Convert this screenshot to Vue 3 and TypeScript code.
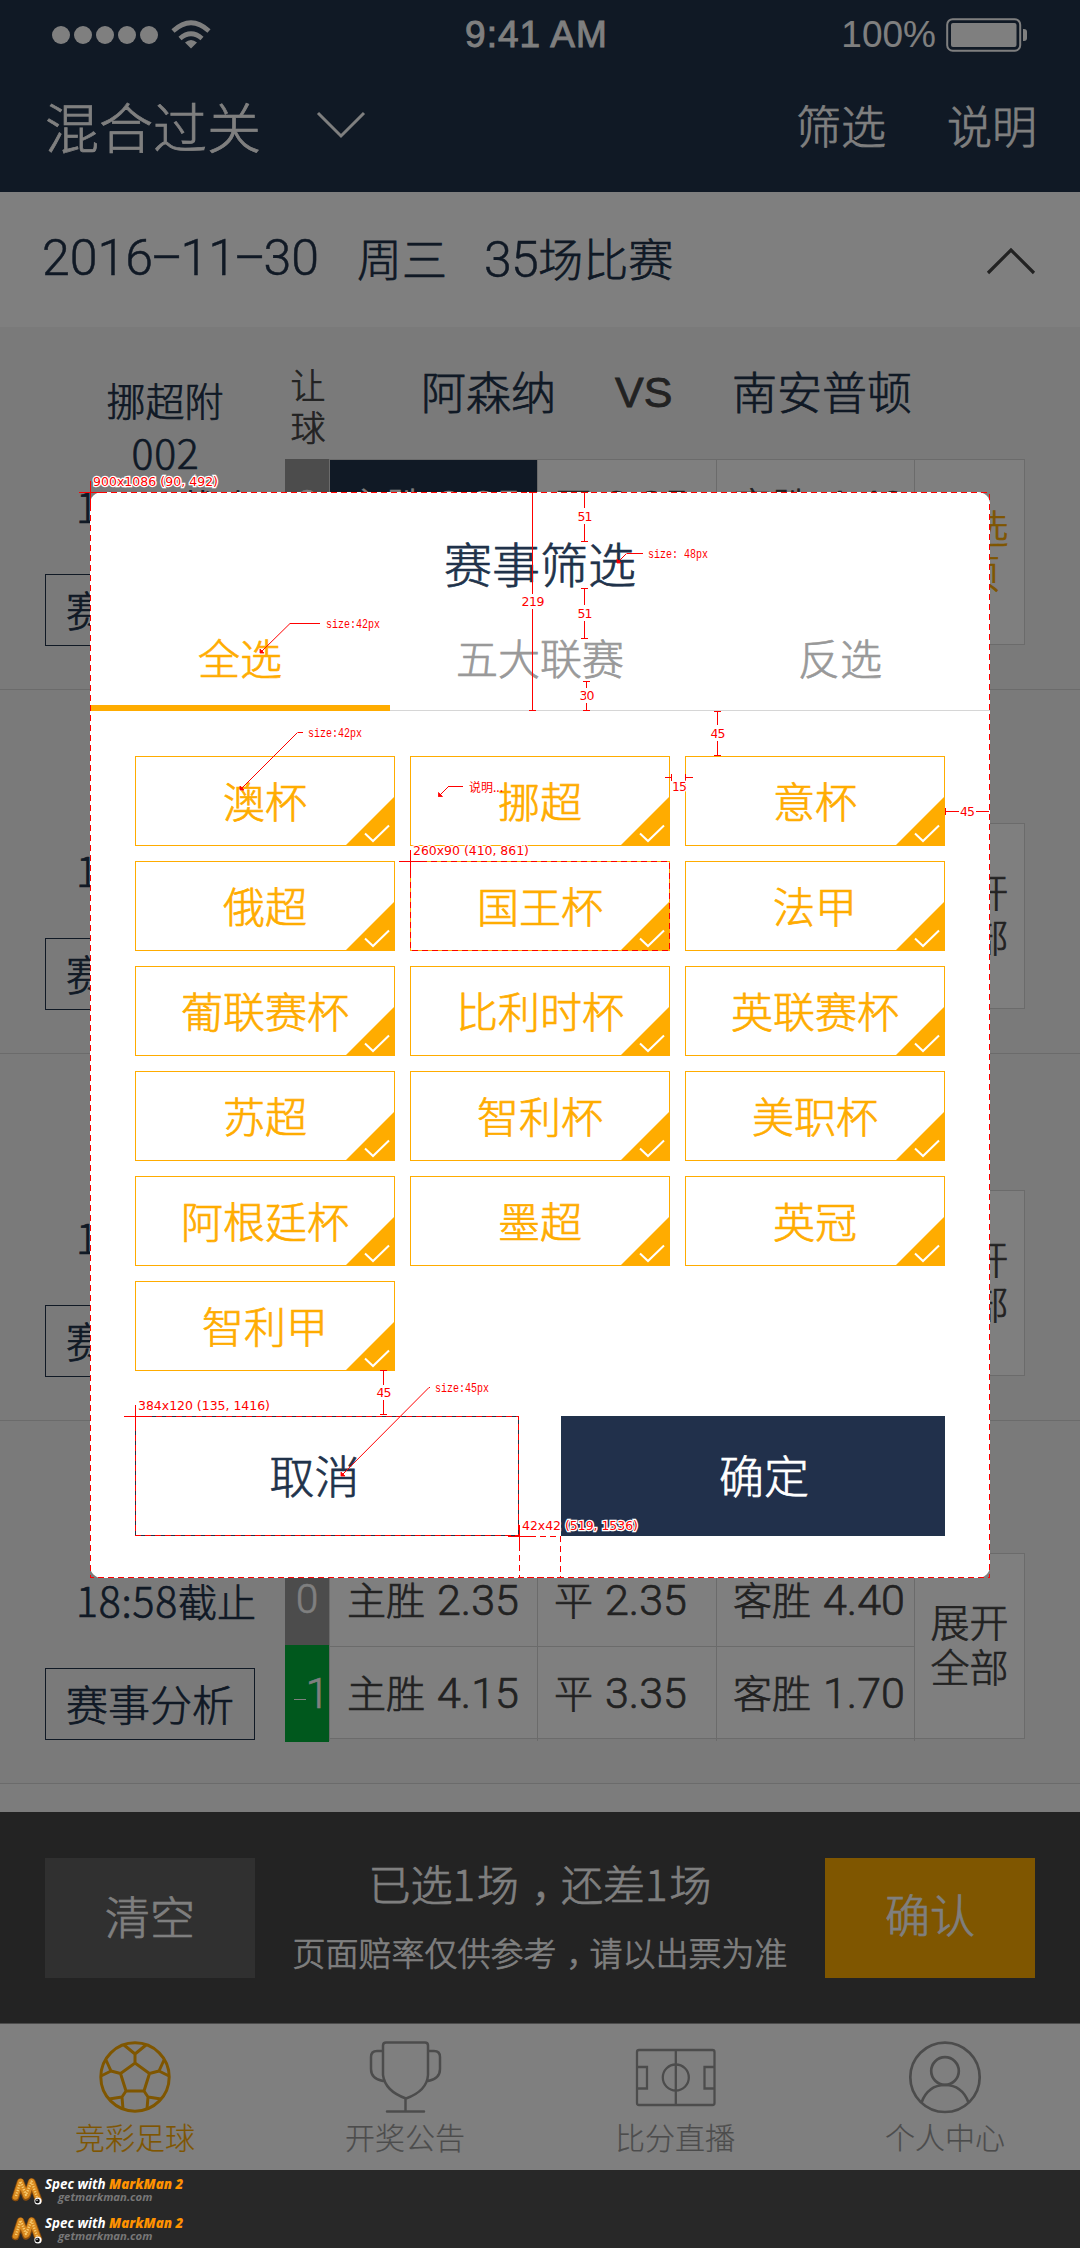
<script setup lang="ts">
interface Odds { name: string; value: string; picked?: boolean }
interface Match {
  league: string
  home: string
  away: string
  height: number
  offset: number
  rows: { handicap: string; green?: boolean; odds: Odds[] }[]
  more: [string, string]
  active?: boolean
}

const rows = (picked = false): Match['rows'] => [
  {
    handicap: '0',
    odds: [
      { name: '主胜', value: '2.35', picked },
      { name: '平', value: '2.35' },
      { name: '客胜', value: '4.40' },
    ],
  },
  {
    handicap: '-1',
    green: true,
    odds: [
      { name: '主胜', value: '4.15' },
      { name: '平', value: '3.35' },
      { name: '客胜', value: '1.70' },
    ],
  },
]

const base = { league: '挪超附', home: '阿森纳', away: '南安普顿' }
const matches: Match[] = [
  { ...base, height: 363, offset: 0, rows: rows(true), more: ['已选', '1项'], active: true },
  { ...base, height: 364, offset: 1, rows: rows(), more: ['展开', '全部'] },
  { ...base, height: 367, offset: 4, rows: rows(), more: ['展开', '全部'] },
  { ...base, height: 363, offset: 0, rows: rows(), more: ['展开', '全部'] },
]

const filterTabs = ['全选', '五大联赛', '反选']
const leagues = [
  '澳杯', '挪超', '意杯', '俄超', '国王杯', '法甲', '葡联赛杯', '比利时杯',
  '英联赛杯', '苏超', '智利杯', '美职杯', '阿根廷杯', '墨超', '英冠', '智利甲',
]

// Spec marks: vertical spans, pointer lines and framed areas
const spans = [
  { x: 532.5, y1: 492.5, y2: 710.5, g1: 594, g2: 609, text: '219', w: 23 },
  { x: 584.5, y1: 492.5, y2: 541.5, g1: 508, g2: 524, text: '51', w: 15 },
  { x: 584.5, y1: 588.5, y2: 638.5, g1: 605, g2: 621, text: '51', w: 15 },
  { x: 586.5, y1: 681.5, y2: 710.5, g1: 688, g2: 703, text: '30', w: 15 },
  { x: 717.5, y1: 711.5, y2: 755.5, g1: 725, g2: 741, text: '45', w: 15 },
  { x: 383.5, y1: 1370.5, y2: 1414.5, g1: 1385, g2: 1400, text: '45', w: 15 },
]
const frames = [
  { x: 90, y: 492, w: 900, h: 1086, text: '900x1086 (90, 492)', tw: 125 },
  { x: 410, y: 861, w: 260, h: 90, text: '260x90 (410, 861)', tw: 116 },
  { x: 135, y: 1416, w: 384, h: 120, text: '384x120 (135, 1416)', tw: 132 },
  { x: 519, y: 1536, w: 42, h: 42, text: '42x42 (519, 1536)', tw: 116 },
]
const pointers = [
  { tx: 260, ty: 653, ex: 290, ey: 623.5, hx: 320, lx: 326, text: 'size:42px', w: 54 },
  { tx: 617, ty: 563, ex: 626.5, ey: 553.5, hx: 643, lx: 648, text: 'size: 48px', w: 60 },
  { tx: 240, ty: 790, ex: 297.5, ey: 732.5, hx: 303, lx: 308, text: 'size:42px', w: 54 },
  { tx: 341, ty: 1476, ex: 429, ey: 1387.5, hx: 430, lx: 435, text: 'size:45px', w: 54 },
]
</script>

<template>
  <div class="page">
    <div class="app">
      <header class="top">
        <div class="status">
          <svg class="signal" width="176" height="34" viewBox="0 0 176 34">
            <g fill="#fff">
              <circle v-for="i in 5" :key="i" :cx="9 + (i - 1) * 22" cy="17" r="9" />
              <path d="M139 30.5l-6-6q6-5 12 0z" />
            </g>
            <g fill="none" stroke="#fff" stroke-width="4.6">
              <path d="M128 20.5q11-9.5 22 0" />
              <path d="M121 13q18-16.500 36 0" />
            </g>
          </svg>
          <div class="clock">9:41 AM</div>
          <div class="power">
            <span>100%</span>
            <svg width="82" height="36" viewBox="0 0 82 36">
              <rect x="1.200" y="2.200" width="73" height="31.500" rx="5.500" fill="none" stroke="#fff" stroke-width="2" />
              <rect x="5" y="6" width="65.500" height="24" rx="2" fill="#fff" />
              <path d="M77 12h1q3 0 3 3v6q0 3-3 3h-1z" fill="#fff" />
            </svg>
          </div>
        </div>
        <div class="nav">
          <span class="nav-title">混合过关</span>
          <svg width="50" height="28" viewBox="0 0 50 28"><path d="M2 2l23 23L48 2" fill="none" stroke="#fff" stroke-width="3" /></svg>
          <span class="nav-link first">筛选</span>
          <span class="nav-link">说明</span>
        </div>
      </header>

      <div class="day">
        <span class="num date">2016<i>–</i>11<i>–</i>30</span>
        <span class="week">周三</span>
        <span class="count"><span class="num">35</span>场比赛</span>
        <svg width="50" height="28" viewBox="0 0 50 28"><path d="M2 26L25 3l23 23" fill="none" stroke="#444" stroke-width="3.200" /></svg>
      </div>

      <div class="list">
        <section v-for="(m, i) in matches" :key="i" class="match" :style="{ height: m.height + 'px', paddingTop: m.offset + 'px' }">
          <div class="info">
            <div class="league">{{ m.league }}</div>
            <div class="code">002</div>
            <div class="time"><span>18:58</span>截止</div>
            <div class="analysis">赛事分析</div>
          </div>
          <div class="board">
            <div class="teams">
              <span class="rq">让<br />球</span>
              <span class="home">{{ m.home }}</span>
              <span class="vs">VS</span>
              <span class="away">{{ m.away }}</span>
            </div>
            <div class="odds">
              <div class="odds-rows">
                <div v-for="r in m.rows" :key="r.handicap" class="odds-row">
                  <div class="handicap" :class="{ green: r.green }">
                    <template v-if="r.green"><i class="minus"></i>1</template>
                    <template v-else>{{ r.handicap }}</template>
                  </div>
                  <div v-for="o in r.odds" :key="o.name" class="cell" :class="{ picked: o.picked }">
                    {{ o.name }}<span class="val">{{ o.value }}</span>
                  </div>
                </div>
              </div>
              <div class="more" :class="{ active: m.active }">{{ m.more[0] }}<br />{{ m.more[1] }}</div>
            </div>
          </div>
        </section>
      </div>

      <div class="betbar">
        <div class="btn clear">清空</div>
        <div class="summary">
          <div class="s1">已选<i>1</i>场<b>，</b>还差<i>1</i>场</div>
          <div class="s2">页面赔率仅供参考<b>，</b>请以出票为准</div>
        </div>
        <div class="btn ok">确认</div>
      </div>

      <nav class="tabs">
        <div class="tab on">
          <svg width="82" height="78" viewBox="-41 -39 82 78" fill="none" stroke="currentColor" stroke-width="3">
            <circle r="34.200" />
            <path d="M0-14L14.500-3.500 9 14H-9L-14.500-3.500zM0-14V-23M0-23L-11-32M0-23L11-32M14.500-3.500L24-6M24-6L29-17M24-6L34-1M-14.500-3.500L-24-6M-24-6L-29-17M-24-6L-34-1M9 14L13 20M13 20L12 32M13 20L26 22M-9 14L-13 20M-13 20L-12 32M-13 20L-26 22" />
          </svg>
          <span>竞彩足球</span>
        </div>
        <div class="tab">
          <svg width="82" height="78" viewBox="-41 -39 82 78" fill="none" stroke="currentColor" stroke-width="2.500" stroke-linecap="round">
            <path d="M-22-31.500q0-3 3-3H20q3 0 3 3V-2Q22 14 1 21.500Q-20 14-22-2zM-22-26h-6q-6 0-6 6V-8Q-34 2-22 4M23-26h6q6 0 6 6V-8Q35 2 23 4M.5 21.500V34.500M-18 34.500H19" />
          </svg>
          <span>开奖公告</span>
        </div>
        <div class="tab">
          <svg width="82" height="78" viewBox="-41 -39 82 78" fill="none" stroke="currentColor" stroke-width="2.300">
            <rect x="-38" y="-27" width="77.500" height="55" rx="2" />
            <path d="M.8-27V28M-38-10h10V11.500h-10M39.500-10h-10V11.500h10" />
            <circle cx=".8" cy=".5" r="13" />
          </svg>
          <span>比分直播</span>
        </div>
        <div class="tab">
          <svg width="82" height="78" viewBox="-41 -39 82 78" fill="none" stroke="currentColor" stroke-width="2.700">
            <circle cy=".3" r="34.700" />
            <circle cy="-6" r="13.800" />
            <path d="M-23.500 25.500Q-17 8 0 8T23.500 25.500" />
          </svg>
          <span>个人中心</span>
        </div>
      </nav>

      <div class="scrim"></div>

      <div class="dialog">
        <div class="d-title">赛事筛选</div>
        <div class="d-tabs">
          <div v-for="(t, i) in filterTabs" :key="t" class="d-tab" :class="{ on: i === 0 }">{{ t }}</div>
        </div>
        <div class="chips">
          <div v-for="l in leagues" :key="l" class="chip">
            {{ l }}
            <svg class="mark" width="50" height="50" viewBox="0 0 50 50">
              <path d="M0 50L50 0v50z" fill="#ffac00" />
              <path d="M20 37.500l8 7.500L44 29.500" fill="none" stroke="#fff" stroke-width="2" />
            </svg>
          </div>
        </div>
        <div class="actions">
          <div class="action">取消</div>
          <div class="action primary">确定</div>
        </div>
      </div>

      <svg class="spec" width="1080" height="2170" viewBox="0 0 1080 2170">
        <g fill="none" stroke="#f00" shape-rendering="crispEdges">
          <template v-for="f in frames" :key="f.text">
            <rect :x="f.x + 0.5" :y="f.y + 0.5" :width="f.w - 1" :height="f.h - 1" stroke-dasharray="6 4" />
            <path :d="`M${f.x - 11} ${f.y + 0.5}h26M${f.x + 0.5} ${f.y - 11}v26`" />
          </template>
          <path
            v-for="s in spans" :key="s.x + '-' + s.y1"
            :d="`M${s.x - 3.5} ${s.y1}h7M${s.x} ${s.y1}V${s.g1}M${s.x} ${s.g2}V${s.y2}M${s.x - 3.5} ${s.y2}h7`"
          />
          <path d="M665 777.500h6M671.500 774v7M685.500 774v7M686 777.500h7M945.500 808v7M946 811.500h13M976 811.500h13" />
        </g>
        <g fill="none" stroke="#f00">
          <g v-for="p in pointers" :key="p.ty">
            <path :d="`M${p.ex} ${p.ey}H${p.hx}`" shape-rendering="crispEdges" />
            <path :d="`M${p.tx} ${p.ty}L${p.ex} ${p.ey}`" />
            <path :d="`M${p.tx} ${p.ty}v-4l4 4z`" fill="#f00" stroke-width=".8" />
          </g>
          <path d="M448 786.500h15" shape-rendering="crispEdges" />
          <path d="M438.500 796.500l10-10" />
          <path d="M438.500 796.500v-4l4 4z" fill="#f00" stroke-width=".8" />
        </g>
        <g class="dim">
          <text v-for="f in frames" :key="f.text" :x="f.x + 3" :y="f.y - 6" :textLength="f.tw">{{ f.text }}</text>
          <text v-for="s in spans" :key="s.x + '-' + s.y1" :x="s.x + 0.5 - s.w / 2" :y="(s.g1 + s.g2) / 2 + 4.5" :textLength="s.w">{{ s.text }}</text>
          <text x="672" y="791" textLength="15">15</text>
          <text x="960" y="815.500" textLength="15">45</text>
        </g>
        <g class="note">
          <text v-for="p in pointers" :key="p.ty" :x="p.lx" :y="p.ey + 4" :textLength="p.w" lengthAdjust="spacingAndGlyphs">{{ p.text }}</text>
          <text x="469" y="791.500" class="cn">说明...</text>
        </g>
      </svg>
    </div>

    <footer class="credits">
      <div v-for="i in 2" :key="i" class="credit">
        <svg width="33" height="30" viewBox="0 0 33 30" fill="none" stroke-linecap="round" stroke-linejoin="round">
          <path d="M4.500 20.500L9.500 5M10 6L15 20M16 19L20.500 5M21 5L27.500 23" stroke="#8a4d0c" stroke-width="7.400" />
          <path d="M4.500 20L9.500 4.500M10 6L15 19M16 18L20.500 4.500M21 5L27 22" stroke="#d98a20" stroke-width="5.600" />
          <path d="M5 19L9.500 4.500L15 18L20.500 4.500L26 20" stroke="#f8cc70" stroke-width="2.400" stroke-linecap="butt" stroke-dasharray="1.200 1.400" />
          <circle cx="27" cy="24" r="3.600" fill="#fff" />
          <circle cx="26.500" cy="24" r="2.300" fill="#111" />
          <circle cx="26" cy="23.300" r=".7" fill="#fff" />
        </svg>
        <div class="credit-text">
          <div class="c1">Spec with <b>MarkMan 2</b></div>
          <div class="c2">getmarkman.com</div>
        </div>
      </div>
    </footer>
  </div>
</template>

<style>
body {
  margin: 0;
}
</style>

<style scoped>
.page {
  width: 1080px;
  height: 2248px;
  overflow: hidden;
  font-family: "Noto Sans CJK SC", sans-serif;
  font-weight: 300;
  -webkit-text-stroke: 0.7px currentColor;
  background: #282828;
}
.page * {
  box-sizing: border-box;
}
.page i {
  font-style: normal;
}
.app {
  position: relative;
  height: 2170px;
  display: flex;
  flex-direction: column;
  background: #f8f8f8;
}
.top {
  height: 192px;
  background: #20324a;
  color: #fff;
}
.status {
  height: 69px;
  display: grid;
  grid-template-columns: 1fr 150px 1fr;
  align-items: center;
  font: 400 37px/40px "Liberation Sans", sans-serif;
  -webkit-text-stroke: 0;
}
.signal {
  margin-left: 52px;
}
.clock {
  text-align: center;
  white-space: nowrap;
  letter-spacing: 1px;
  margin-left: -7px;
  -webkit-text-stroke: 0.9px #fff;
}
.power {
  display: flex;
  justify-content: flex-end;
  align-items: center;
  gap: 10px;
  padding-right: 52px;
}
.nav {
  height: 112px;
  display: flex;
  align-items: center;
  padding: 0 43px 0 45px;
}
.nav-title {
  font-size: 54px;
  width: 271px;
}
.nav-link {
  font-size: 45px;
  padding-bottom: 1px;
}
.nav-link.first {
  margin-left: auto;
  margin-right: 61px;
}
.day {
  height: 135px;
  display: flex;
  align-items: center;
  padding: 0 44px 4px 42px;
  background: #fff;
  color: #20324a;
  font-size: 45px;
}
.num {
  font: 300 50px/60px Roboto, "Liberation Sans", sans-serif;
  letter-spacing: -0.5px;
  -webkit-text-stroke: 0.5px currentColor;
}
.date {
  display: inline-flex;
  letter-spacing: 0;
}
.date i {
  width: 27.5px;
  display: flex;
  justify-content: center;
}
.week {
  width: 90px;
  margin-left: 38px;
}
.count {
  margin-left: 37px;
  white-space: nowrap;
}
.day svg {
  margin-left: auto;
  margin-top: 6px;
}
.list {
  height: 1485px;
}
.match {
  display: flex;
  gap: 30px;
  padding-left: 45px;
  background: #f4f4f4;
  border-bottom: 1px solid #d6d6d6;
}
.info {
  width: 210px;
  padding-top: 46px;
  text-align: center;
  color: #20324a;
  font-size: 39px;
}
.league {
  line-height: 52px;
  padding-left: 30px;
}
.code {
  font-size: 41px;
  line-height: 52px;
  letter-spacing: 0.8px;
  padding-left: 31px;
}
.time {
  line-height: 56px;
  font-size: 39px;
  padding-left: 31px;
  white-space: nowrap;
  text-align: left;
}
.time span {
  font-size: 41px;
  letter-spacing: 0.8px;
}
.analysis {
  margin-top: 40px;
  height: 72px;
  line-height: 68px;
  border: 1px solid #20324a;
  font-size: 42px;
}
.board {
  width: 740px;
}
.teams {
  height: 132px;
  display: flex;
  color: #20324a;
  font-size: 45px;
  line-height: 127px;
}
.rq {
  width: 46px;
  text-align: center;
  font-size: 35px;
  line-height: 42px;
  padding-top: 36px;
  color: #444;
}
.home {
  margin-left: 90px;
  width: 135px;
}
.vs {
  margin-left: 59px;
  width: 59px;
  color: #444;
  font: 400 43px/130px "Liberation Sans", sans-serif;
  -webkit-text-stroke: 0.8px #444;
}
.away {
  margin-left: 58px;
}
.odds {
  display: flex;
  height: 186px;
  background: #fff;
  border: 1px solid #d6d6d6;
  border-left: 0;
}
.odds-rows {
  width: 630px;
}
.odds-row {
  display: grid;
  grid-template-columns: 44px 209px 179px 198px;
  height: 92px;
}
.odds-row + .odds-row .cell {
  border-top: 1px solid #d6d6d6;
}
.handicap {
  background: #999;
  color: #fff;
  text-align: center;
  font: 300 40px/94px Roboto, "Liberation Sans", sans-serif;
  margin-top: -1px;
}
.handicap.green {
  background: #00b03b;
  margin-bottom: -1px;
  font-size: 42px;
  line-height: 97px;
  display: flex;
  padding-left: 9px;
}
.minus {
  width: 12px;
  height: 1px;
  margin-top: 54px;
  background: #fff;
}
.cell {
  border-right: 1px solid #d6d6d6;
  padding-left: 16px;
  color: #444;
  font-size: 39px;
  line-height: 89px;
  white-space: nowrap;
}
.cell:nth-child(2) {
  padding-left: 17px;
  border-left: 1px solid #d6d6d6;
}
.cell.picked {
  background: #20324a;
  color: #fff;
}
.val {
  margin-left: 12px;
  font: 300 43px/80px Roboto, "Liberation Sans", sans-serif;
}
.more {
  flex: 1;
  text-align: center;
  color: #444;
  font-size: 39px;
  line-height: 44.500px;
  padding-top: 44px;
}
.more.active {
  color: #ffac00;
}
.betbar {
  height: 212px;
  display: flex;
  justify-content: space-between;
  padding: 46px 45px 0;
  background: #464646;
  border-bottom: 1px solid #999;
  color: #fff;
}
.btn {
  width: 210px;
  height: 120px;
  line-height: 116px;
  text-align: center;
  font-size: 45px;
}
.clear {
  background: #606060;
}
.ok {
  background: #ffac00;
  line-height: 111px;
}
.summary {
  text-align: center;
  white-space: nowrap;
}
.summary b {
  position: relative;
  left: 0.3em;
  font-weight: 300;
}
.s1 {
  font-size: 42px;
  line-height: 50px;
}
.s1 i {
  letter-spacing: 2px;
}
.s2 {
  margin-top: 24px;
  font-size: 33px;
  line-height: 40px;
}
.tabs {
  height: 146px;
  display: grid;
  grid-template-columns: repeat(4, 1fr);
  background: #fff;
  -webkit-text-stroke: 0.2px currentColor;
}
.tab {
  display: flex;
  flex-direction: column;
  align-items: center;
  padding-top: 14px;
  color: #999;
  font-size: 30px;
  line-height: 40px;
}
.tab.on {
  color: #ffac00;
}
.scrim {
  position: absolute;
  inset: 0;
  background: rgba(0, 0, 0, 0.5);
}
.dialog {
  position: absolute;
  left: 90px;
  top: 492px;
  width: 900px;
  height: 1086px;
  border-radius: 12px;
  background: #fff;
}
.d-title {
  height: 116px;
  line-height: 141px;
  text-align: center;
  font-size: 48px;
  color: #20324a;
}
.d-tabs {
  height: 103px;
  display: grid;
  grid-template-columns: repeat(3, 1fr);
  border-bottom: 1px solid #d6d6d6;
  text-align: center;
  font-size: 42px;
  line-height: 98px;
  color: #999;
}
.d-tab.on {
  height: 103px;
  color: #ffac00;
  border-bottom: 6px solid #ffac00;
}
.chips {
  margin: 45px 45px 0;
  display: grid;
  grid-template-columns: repeat(3, 260px);
  gap: 15px;
}
.chip {
  position: relative;
  height: 90px;
  border: 1px solid #ffac00;
  color: #ffac00;
  text-align: center;
  font-size: 42px;
  line-height: 85px;
}
.mark {
  position: absolute;
  right: -1px;
  bottom: -1px;
}
.actions {
  margin: 45px 45px 0;
  display: flex;
  gap: 42px;
}
.action {
  width: 384px;
  height: 120px;
  border: 1px solid #20324a;
  color: #20324a;
  text-align: center;
  font-size: 45px;
  line-height: 115px;
  padding-right: 25px;
}
.action.primary {
  background: #21304b;
  color: #fff;
  padding: 0 0 0 22px;
}
.spec {
  position: absolute;
  left: 0;
  top: 0;
  -webkit-text-stroke: 0;
}
.dim text {
  font: 400 12.500px "DejaVu Sans", sans-serif;
  fill: #f00;
  stroke: #fff;
  stroke-width: 2.500px;
  paint-order: stroke;
}
.note text {
  font: 400 12px "Liberation Mono", monospace;
  fill: #f00;
}
.note text.cn {
  font: 400 12px "Noto Sans CJK SC", sans-serif;
}
.credits {
  height: 78px;
  -webkit-text-stroke: 0;
}
.credit {
  height: 39px;
  display: flex;
  padding: 7px 0 0 11px;
}
.credit-text {
  font: italic 700 14px/15px "Open Sans", sans-serif;
  color: #fff;
  white-space: nowrap;
}
.c1 {
  line-height: 14px;
  font-size: 13.400px;
  padding-left: 1px;
}
.c1 b {
  color: #ff9200;
}
.c2 {
  padding-left: 14px;
  font-size: 11.300px;
  line-height: 12px;
  color: #777;
}
</style>
